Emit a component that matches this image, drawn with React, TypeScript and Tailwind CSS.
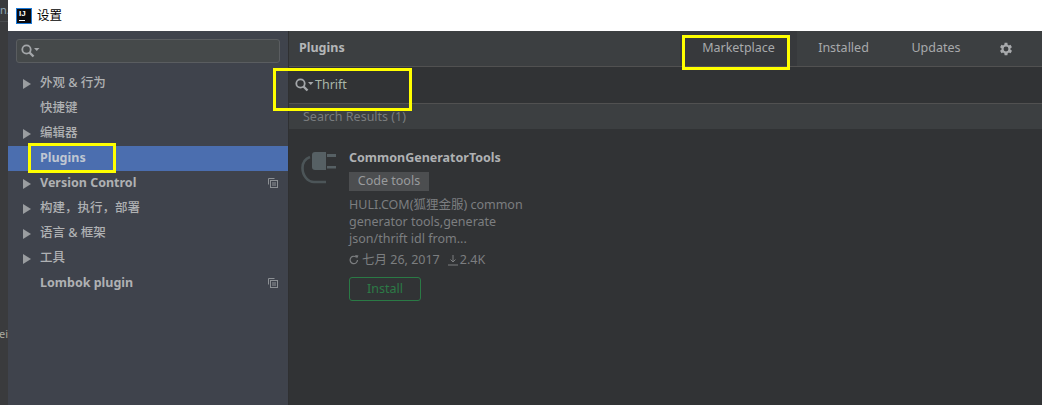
import React from "react";

function Arrow() {
  return (
    <svg width="8" height="10" viewBox="0 0 8 10" className="absolute left-[15px] top-[8px]">
      <polygon points="0,0 8,5 0,10" fill="#9a9da0" />
    </svg>
  );
}

function Copy() {
  return (
    <svg width="10" height="10" viewBox="0 0 10 10" className="absolute right-[10px] top-[7px]" fill="none" stroke="#8c9094" strokeWidth="1">
      <path d="M0.5 6.5V0.5H6.5" />
      <rect x="2.5" y="2.5" width="7" height="7" />
      <path d="M4 5H8M4 7H8" />
    </svg>
  );
}

function SearchIcon() {
  return (
    <svg width="20" height="14" viewBox="0 0 20 14" fill="none">
      <circle cx="5.5" cy="5.5" r="4.2" stroke="#a4a7aa" strokeWidth="1.8" />
      <path d="M8.5 8.5L12.5 12.5" stroke="#a4a7aa" strokeWidth="2.4" />
      <polygon points="13,4 18.5,4 15.75,7" fill="#a4a7aa" />
    </svg>
  );
}

function Row({ label, arrow, copy, bold, active }: { label: string; arrow?: boolean; copy?: boolean; bold?: boolean; active?: boolean }) {
  return (
    <div className={`relative h-[25px] pl-[32px] flex items-center text-[12.5px] leading-none ${bold ? "font-bold" : "font-medium"} ${active ? "bg-[#4b6eaf] text-[#bfc6d2]" : "text-[#afb1b3]"}`}>
      {arrow && <Arrow />}
      <span>{label}</span>
      {copy && <Copy />}
    </div>
  );
}

function Plug() {
  return (
    <svg width="36" height="36" viewBox="0 0 36 36" fill="none">
      <path d="M14 2H25V20H14C12 20 11 19 11 17V5C11 3 12 2 14 2Z" fill="#566064" />
      <rect x="26" y="4" width="9" height="3" fill="#566064" />
      <rect x="26" y="16" width="9" height="2.5" fill="#566064" />
      <path d="M9 7C3.5 9 1.5 14 1.5 18C1.5 26 7 32 13 32H25" stroke="#4c5558" strokeWidth="2.6" />
    </svg>
  );
}

export default function App() {
  return (
    <div className="w-[1042px] h-[405px] flex overflow-hidden bg-[#3c3f41] text-[#afb1b3] [font-family:'Noto_Sans','Noto_Sans_CJK_SC',sans-serif]">
      <div className="w-[8px] shrink-0 bg-[#3a3b3d] overflow-hidden flex flex-col items-end">
        <div className="h-[22px] w-full pt-[2px] border-b border-[#4a4c4e] text-[11px] leading-[16px] text-[#8fa8b8] whitespace-nowrap text-right">n.</div>
        <div className="mt-[305px] text-[11px] leading-[14px] text-[#a9a9a0] whitespace-nowrap">ei</div>
      </div>
      <div className="flex-1 min-w-0 flex flex-col relative">
        <div className="h-[31px] shrink-0 bg-white flex items-center pl-[8px] gap-[5px] text-[12.5px] text-black">
          <div className="w-[16px] h-[16px] bg-[#0b0b0f] border border-[#1c7ad8] flex flex-col px-[2px] pt-[1px]">
            <span className="text-white text-[8px] font-bold leading-[8px] [font-family:'Liberation_Sans',sans-serif]">IJ</span>
            <span className="block w-[6px] h-[1px] bg-white mt-[2px]" />
          </div>
          <span className="pt-[1px]">设置</span>
        </div>
        <div className="flex-1 flex min-h-0">
          <div className="w-[280px] shrink-0 bg-[#3f434c] pt-[8px]">
            <div className="mx-[8px] h-[24px] rounded-[3px] border border-[#5a5d60] bg-[#45494a] flex items-center pl-[4px]">
              <SearchIcon />
            </div>
            <div className="mt-[8px]">
              <Row label="外观 & 行为" arrow />
              <Row label="快捷键" />
              <Row label="编辑器" arrow />
              <Row label="Plugins" bold active />
              <Row label="Version Control" arrow copy bold />
              <Row label="构建，执行，部署" arrow />
              <Row label="语言 & 框架" arrow />
              <Row label="工具" arrow />
              <Row label="Lombok plugin" copy bold />
            </div>
          </div>
          <div className="w-[1px] shrink-0 bg-[#2f3032]" />
          <div className="flex-1 min-w-0 flex flex-col">
            <div className="h-[36px] shrink-0 flex items-center justify-between bg-[#3c3f41] border-b border-[#515151]">
              <span className="pl-[10px] text-[12.5px] font-bold text-[#b4b6b8]">Plugins</span>
              <div className="flex items-center h-full text-[12.5px] text-[#a8aaac]">
                <div className="h-full w-[117px] bg-[#37393c] flex items-center justify-center">Marketplace</div>
                <div className="w-[92px] text-center pl-[1px]">Installed</div>
                <div className="w-[94px] text-center">Updates</div>
                <div className="w-[59px] pl-[16px] flex items-center">
                  <svg width="14" height="14" viewBox="3 2 20 20" fill="#a8aaac">
                    <path d="M19.4 13a7.6 7.6 0 0 0 0-2l2.1-1.6-2-3.5-2.5 1a7.6 7.6 0 0 0-1.7-1L15 3.2h-4l-.4 2.7a7.6 7.6 0 0 0-1.7 1l-2.4-1-2 3.5L6.6 11a7.6 7.6 0 0 0 0 2l-2.1 1.6 2 3.5 2.4-1a7.6 7.6 0 0 0 1.7 1l.4 2.7h4l.4-2.7a7.6 7.6 0 0 0 1.7-1l2.5 1 2-3.5ZM13 15.5a3.5 3.5 0 1 1 0-7 3.5 3.5 0 0 1 0 7Z" />
                  </svg>
                </div>
              </div>
            </div>
            <div className="h-[37px] shrink-0 flex items-center bg-[#313335] border-b border-[#515151] pl-[6px] text-[12.5px] text-[#a9b7a9]">
              <SearchIcon />
              <span>Thrift</span>
            </div>
            <div className="h-[25px] shrink-0 flex items-center bg-[#3c3f41] pl-[14px] pt-[2px] text-[12.5px] text-[#797c7e]">Search Results (1)</div>
            <div className="flex-1 bg-[#313335] flex pl-[12px] pt-[21px] min-h-0">
              <div className="w-[48px] shrink-0">
                <Plug />
              </div>
              <div className="w-[180px] flex flex-col">
                <div className="text-[12.5px] font-bold text-[#afb1b3] leading-[16px] whitespace-nowrap">CommonGeneratorTools</div>
                <div className="mt-[6px] w-[80px] h-[19px] bg-[#4c4e50] text-[12.5px] text-[#999b9d] flex items-center justify-center">Code tools</div>
                <div className="mt-[5px] text-[12.5px] leading-[17px] text-[#7c7e80] whitespace-nowrap">
                  <div>HULI.COM(狐狸金服) common</div>
                  <div>generator tools,generate</div>
                  <div>json/thrift idl from...</div>
                </div>
                <div className="mt-[4px] flex items-center text-[12.5px] text-[#7c7e80] leading-[18px] whitespace-nowrap">
                  <svg width="10" height="10" viewBox="0 0 10 10" fill="none" className="mr-[3px]">
                    <path d="M8.5 5A3.7 3.7 0 1 1 7 2" stroke="#7c7e80" strokeWidth="1.2" />
                    <polygon points="6,0 9.5,0.5 8,3.5" fill="#7c7e80" />
                  </svg>
                  <span>七月 26, 2017</span>
                  <svg width="10" height="11" viewBox="0 0 10 11" fill="none" className="ml-[8px] mr-[2px]">
                    <path d="M5 0V7M2.5 4.5L5 7L7.5 4.5M0 10H10" stroke="#7c7e80" strokeWidth="1" />
                  </svg>
                  <span>2.4K</span>
                </div>
                <div className="mt-[8px] w-[72px] h-[24px] rounded-[3px] border border-[#2a7a45] text-[12.5px] text-[#2c7a46] flex items-center justify-center">Install</div>
              </div>
            </div>
          </div>
        </div>
      </div>
      <div className="absolute left-[682px] top-[35px] w-[108px] h-[35px] border-[3px] border-[#ffff00]" />
      <div className="absolute left-[273px] top-[68px] w-[139px] h-[43px] border-[3px] border-[#ffff00]" />
      <div className="absolute left-[28px] top-[143px] w-[88px] h-[30px] border-[3px] border-[#ffff00]" />
    </div>
  );
}
